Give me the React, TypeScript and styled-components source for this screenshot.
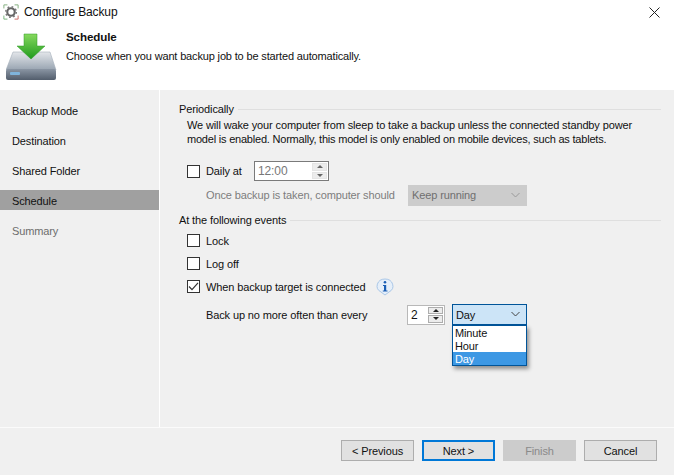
import React from "react";
import styled, { createGlobalStyle } from "styled-components";

const Global = createGlobalStyle`
  html, body { margin: 0; padding: 0; background: #f0f0f0; }
  body { font-family: "Liberation Sans", Arial, sans-serif; font-size: 11px; letter-spacing: -0.12px; color: #111; }
`;
const Window = styled.div`
  width: 674px; height: 475px; display: flex; flex-direction: column; overflow: hidden; background: #f0f0f0;
`;
const Header = styled.header`
  height: 90px; flex: none; background: #fff; display: flex; flex-direction: column; box-sizing: border-box;
`;
const TitleBar = styled.div`
  height: 24px; flex: none; display: flex; align-items: center; padding: 0 14px 0 3px; gap: 5px; font-size: 12px;
`;
const Title = styled.span` flex: 1; `;
const Banner = styled.div`
  display: flex; padding: 4px 0 0 6px; gap: 9px; align-items: flex-start;
`;
const BannerText = styled.div`
  display: flex; flex-direction: column; gap: 5px; padding-top: 1px;
`;
const BannerTitle = styled.div` font-weight: 700; font-size: 11.6px; line-height: 15px; `;
const BannerSub = styled.div` line-height: 15px; letter-spacing: -0.155px; `;
const Middle = styled.div`
  flex: none; height: 337px; display: flex; border-bottom: 1px solid #fbfbfb;
`;
const Sidebar = styled.nav`
  width: 159px; flex: none; padding-top: 10px; display: flex; flex-direction: column; gap: 10px; border-right: 1px solid #fff;
`;
const NavItem = styled.div<{ $active?: boolean; $dim?: boolean }>`
  height: 20px; line-height: 22px; padding-left: 12px;
  background: ${(p) => (p.$active ? "#a0a0a0" : "transparent")};
  color: ${(p) => (p.$dim ? "#6d6d6d" : "#111")};
`;
const Content = styled.main`
  flex: 1; padding: 11px 13px 0 19px; display: flex; flex-direction: column; min-width: 0;
`;
const GroupHead = styled.div<{ $gap?: number }>`
  display: flex; align-items: center; gap: 4px; height: 16px; margin-top: ${(p) => p.$gap ?? 0}px;
  &::after { content: ""; flex: 1; height: 1px; background: #dfdfdf; }
`;
const Indented = styled.div`
  padding-left: 8px; display: flex; flex-direction: column;
`;
const Desc = styled.div`
  margin-top: 1px; display: flex; flex-direction: column;
`;
const DescLine = styled.span<{ $track: number }>`
  line-height: 14px; white-space: nowrap; letter-spacing: ${(p) => p.$track}px;
`;
const Row = styled.div<{ $h: number; $gap?: number }>`
  display: flex; align-items: center; height: ${(p) => p.$h}px; margin-top: ${(p) => p.$gap ?? 0}px; white-space: nowrap; position: relative;
`;
const Check = styled.span`
  width: 13px; height: 13px; border: 1px solid #333; background: #fff; box-sizing: border-box; flex: none; margin-right: 6px;
  display: flex; align-items: center; justify-content: center;
`;
const Label = styled.span<{ $w?: number; $dim?: boolean; $inset?: boolean }>`
  ${(p) => (p.$w ? `width: ${p.$w}px;` : "")}
  ${(p) => (p.$inset ? "margin-left: 19px;" : "")}
  flex: none; color: ${(p) => (p.$dim ? "#7d7d7d" : "#111")};
`;
const Spin = styled.div<{ $w: number; $h: number; $border: string }>`
  width: ${(p) => p.$w}px; height: ${(p) => p.$h}px; box-sizing: border-box; background: #fff; flex: none;
  border: 1px solid ${(p) => p.$border}; display: flex; align-items: center; justify-content: space-between; padding: 1px 1px 1px 3px;
`;
const SpinValue = styled.span<{ $dim?: boolean }>`
  color: ${(p) => (p.$dim ? "#777" : "#111")}; font-size: 12px;
`;
const SpinArrows = styled.div`
  width: 15px; align-self: stretch; display: flex; flex-direction: column; gap: 1px; flex: none;
`;
const SpinArrow = styled.div<{ $edge?: boolean }>`
  flex: 1; background: #ececec; display: flex; align-items: center; justify-content: center;
  box-sizing: border-box; border: 1px solid ${(p) => (p.$edge ? "#adadad" : "#e4e4e4")};
`;
const Combo = styled.div<{ $w: number; $h: number; $open?: boolean }>`
  width: ${(p) => p.$w}px; height: ${(p) => p.$h}px; box-sizing: border-box;
  background: ${(p) => (p.$open ? "#cce4f7" : "#cccccc")};
  border: 1px solid ${(p) => (p.$open ? "#005499" : "#cccccc")};
  color: ${(p) => (p.$open ? "#111" : "#6f6f6f")};
  display: flex; align-items: center; justify-content: space-between; padding: 0 5px 0 3px; flex: none;
`;
const ComboWrap = styled.div` position: relative; margin-left: 7px; `;
const Menu = styled.ul`
  position: absolute; left: 0; top: 21px; width: 75px; margin: 0; padding: 0; list-style: none; box-sizing: border-box;
  background: #fff; border: 1px solid #005499; box-shadow: 2px 3px 4px rgba(0,0,0,.4); z-index: 2;
`;
const MenuItem = styled.li<{ $sel?: boolean }>`
  height: 13px; line-height: 14px; padding-left: 2px;
  background: ${(p) => (p.$sel ? "#3d98e4" : "transparent")};
  color: ${(p) => (p.$sel ? "#fff" : "#111")};
`;
const Footer = styled.footer`
  flex: 1; display: flex; justify-content: flex-end; gap: 8px; padding: 12px 17px 0 0; align-items: flex-start;
`;
const Button = styled.div<{ $primary?: boolean; $disabled?: boolean }>`
  width: 73px; height: 21px; box-sizing: border-box; display: flex; align-items: center; justify-content: center;
  background: ${(p) => (p.$disabled ? "#cccccc" : "#e1e1e1")};
  border: ${(p) => (p.$primary ? "2px solid #0078d7" : p.$disabled ? "1px solid #cccccc" : "1px solid #adadad")};
  color: ${(p) => (p.$disabled ? "#8a8a8a" : "#111")};
`;

const Chevron = ({ color }: { color: string }) => (
  <svg width="11" height="7" viewBox="0 0 11 7"><path d="M1.500 1l4 4 4-4" fill="none" stroke={color} strokeWidth="1" /></svg>
);
const Tri = ({ up, color }: { up?: boolean; color: string }) => (
  <svg width="6" height="3" viewBox="0 0 6 3"><path d={up ? "M3 0L6 3H0z" : "M0 0h6L3 3z"} fill={color} /></svg>
);
const Tick = () => (
  <svg width="11" height="11" viewBox="0 0 11 11"><path d="M1 5.500l3 3.200L10 1.800" fill="none" stroke="#333" strokeWidth="1.200" /></svg>
);
const AppIcon = () => (
  <svg width="16" height="16" viewBox="0 0 18 18">
    <path d="M1 5V1h4M13 1h4v4" fill="none" stroke="#7aa874" strokeWidth="1" />
    <path d="M1 13v4h4" fill="none" stroke="#6fae72" strokeWidth="1" />
    <path d="M13 17h4v-4" fill="none" stroke="#c9605a" strokeWidth="1" />
    <circle cx="9" cy="9" r="4.200" fill="none" stroke="#666" strokeWidth="2.400" />
    <circle cx="9" cy="9" r="6" fill="none" stroke="#777" strokeWidth="1.600" strokeDasharray="2 2.700" />
  </svg>
);
const DriveIcon = () => (
  <svg width="51" height="53" viewBox="0 0 51 53" style={{ flex: "none" }}>
    <defs>
      <linearGradient id="top" x1="0" y1="0" x2="0" y2="1"><stop offset="0" stopColor="#e3e6ea" /><stop offset="1" stopColor="#98a4b1" /></linearGradient>
      <linearGradient id="front" x1="0" y1="0" x2="0" y2="1"><stop offset="0" stopColor="#8a95a3" /><stop offset="1" stopColor="#525d6c" /></linearGradient>
      <linearGradient id="arrow" x1="0" y1="0" x2="0" y2="1"><stop offset="0" stopColor="#86d95e" /><stop offset="1" stopColor="#1f9a1d" /></linearGradient>
    </defs>
    <path d="M7 24h37l6 18H0z" fill="url(#top)" stroke="#a5afba" strokeWidth=".6" />
    <rect x="0" y="41" width="50" height="11" rx="2" fill="url(#front)" />
    <rect x="4" y="44" width="10" height="3" rx="1" fill="#7fb4dc" />
    <path d="M18 6h13v12h8L25 31 11 18h7z" fill="url(#arrow)" stroke="#2c9a26" strokeWidth=".5" />
  </svg>
);
const InfoIcon = () => (
  <svg width="18" height="18" viewBox="0 0 18 18" style={{ marginLeft: 10 }}>
    <path d="M9 1a8 7 0 0 1 4 13l-4 3-4-3A8 7 0 0 1 9 1z" fill="#e6eff9" stroke="#a9c7e8" strokeWidth="1" />
    <circle cx="9" cy="4.200" r="1.300" fill="#1c5fb5" />
    <path d="M7 7h3.200v5.500H11.500v1H6.800v-1H8V8H7z" fill="#1c5fb5" />
  </svg>
);

export default function App() {
  return (
    <Window>
      <Global />
      <Header>
        <TitleBar>
          <AppIcon />
          <Title>Configure Backup</Title>
          <svg width="11" height="11" viewBox="0 0 11 11"><path d="M.5.500l10 10M10.500.500l-10 10" stroke="#222" strokeWidth="1" /></svg>
        </TitleBar>
        <Banner>
          <DriveIcon />
          <BannerText>
            <BannerTitle>Schedule</BannerTitle>
            <BannerSub>Choose when you want backup job to be started automatically.</BannerSub>
          </BannerText>
        </Banner>
      </Header>
      <Middle>
        <Sidebar>
          <NavItem>Backup Mode</NavItem>
          <NavItem>Destination</NavItem>
          <NavItem>Shared Folder</NavItem>
          <NavItem $active>Schedule</NavItem>
          <NavItem $dim>Summary</NavItem>
        </Sidebar>
        <Content>
          <GroupHead>Periodically</GroupHead>
          <Indented>
            <Desc>
              <DescLine $track={-0.13}>We will wake your computer from sleep to take a backup unless the connected standby power</DescLine>
              <DescLine $track={-0.21}>model is enabled. Normally, this model is only enabled on mobile devices, such as tablets.</DescLine>
            </Desc>
            <Row $h={24} $gap={13}>
              <Check />
              <Label $w={48}>Daily at</Label>
              <Spin $w={75} $h={20} $border="#7a7a7a">
                <SpinValue $dim>12:00</SpinValue>
                <SpinArrows>
                  <SpinArrow><Tri up color="#666" /></SpinArrow>
                  <SpinArrow><Tri color="#666" /></SpinArrow>
                </SpinArrows>
              </Spin>
            </Row>
            <Row $h={24}>
              <Label $w={202} $dim $inset>Once backup is taken, computer should</Label>
              <Combo $w={119} $h={21}>Keep running<Chevron color="#9a9a9a" /></Combo>
            </Row>
          </Indented>
          <GroupHead $gap={5}>At the following events</GroupHead>
          <Indented>
            <Row $h={23} $gap={1}><Check /><Label>Lock</Label></Row>
            <Row $h={23}><Check /><Label>Log off</Label></Row>
            <Row $h={23}><Check><Tick /></Check><Label>When backup target is connected</Label><InfoIcon /></Row>
            <Row $h={21} $gap={6}>
              <Label $w={201} $inset>Back up no more often than every</Label>
              <Spin $w={38} $h={20} $border="#b8b8b8">
                <SpinValue>2</SpinValue>
                <SpinArrows>
                  <SpinArrow $edge><Tri up color="#222" /></SpinArrow>
                  <SpinArrow $edge><Tri color="#222" /></SpinArrow>
                </SpinArrows>
              </Spin>
              <ComboWrap>
                <Combo $w={75} $h={21} $open>Day<Chevron color="#444" /></Combo>
                <Menu>
                  <MenuItem>Minute</MenuItem>
                  <MenuItem>Hour</MenuItem>
                  <MenuItem $sel>Day</MenuItem>
                </Menu>
              </ComboWrap>
            </Row>
          </Indented>
        </Content>
      </Middle>
      <Footer>
        <Button>&lt; Previous</Button>
        <Button $primary>Next &gt;</Button>
        <Button $disabled>Finish</Button>
        <Button>Cancel</Button>
      </Footer>
    </Window>
  );
}
